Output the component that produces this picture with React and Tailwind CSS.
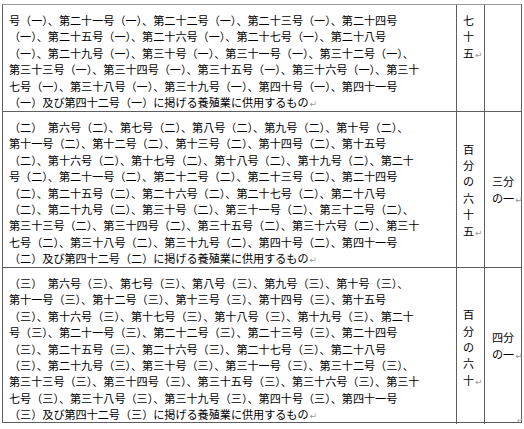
import React from "react";

const Mark = () => (
  <span className="text-[#9a9a9a] text-[9px] leading-none [font-family:'DejaVu_Sans',sans-serif] ml-[1px] align-baseline">↵</span>
);

function Lines({ lines }) {
  return (
    <div>
      {lines.map((l, i) => (
        <div key={i} className="whitespace-nowrap h-[16.4px]">
          {l}
          {i === lines.length - 1 && <Mark />}
        </div>
      ))}
    </div>
  );
}

const r1 = [
  "号（一）、第二十一号（一）、第二十二号（一）、第二十三号（一）、第二十四号",
  "（一）、第二十五号（一）、第二十六号（一）、第二十七号（一）、第二十八号",
  "（一）、第二十九号（一）、第三十号（一）、第三十一号（一）、第三十二号（一）、",
  "第三十三号（一）、第三十四号（一）、第三十五号（一）、第三十六号（一）、第三十",
  "七号（一）、第三十八号（一）、第三十九号（一）、第四十号（一）、第四十一号",
  "（一）及び第四十二号（一）に掲げる養殖業に供用するもの",
];

const mk = (k) => [
  `（${k}）　第六号（${k}）、第七号（${k}）、第八号（${k}）、第九号（${k}）、第十号（${k}）、`,
  `第十一号（${k}）、第十二号（${k}）、第十三号（${k}）、第十四号（${k}）、第十五号`,
  `（${k}）、第十六号（${k}）、第十七号（${k}）、第十八号（${k}）、第十九号（${k}）、第二十`,
  `号（${k}）、第二十一号（${k}）、第二十二号（${k}）、第二十三号（${k}）、第二十四号`,
  `（${k}）、第二十五号（${k}）、第二十六号（${k}）、第二十七号（${k}）、第二十八号`,
  `（${k}）、第二十九号（${k}）、第三十号（${k}）、第三十一号（${k}）、第三十二号（${k}）、`,
  `第三十三号（${k}）、第三十四号（${k}）、第三十五号（${k}）、第三十六号（${k}）、第三十`,
  `七号（${k}）、第三十八号（${k}）、第三十九号（${k}）、第四十号（${k}）、第四十一号`,
  `（${k}）及び第四十二号（${k}）に掲げる養殖業に供用するもの`,
];

const cellL = "pl-[6px] pt-[7px] pb-[1px]";

export default function App() {
  return (
    <div className="w-[524px] h-[429px] bg-white relative overflow-hidden text-black text-[11.1px] leading-[16.4px] [font-family:'Noto_Sans_CJK_JP','Noto_Sans_CJK_SC',sans-serif]">
      <div className="mt-[4px] ml-[2px] w-[520px] border border-[#5e5e5e] border-t-[#9a9a9a]">
        {/* row 1 */}
        <div className="grid grid-cols-[453px_28px_37px] h-[106px]">
          <div className={cellL}>
            <Lines lines={r1} />
          </div>
          <div className={`border-l border-[#5e5e5e] ${cellL}`}>
            <Lines lines={["七", "十", "五"]} />
          </div>
          <div className="border-l border-[#5e5e5e]"></div>
        </div>
        {/* row 2 */}
        <div className="grid grid-cols-[453px_28px_37px] border-t border-[#5e5e5e] h-[156px]">
          <div className={cellL}>
            <Lines lines={mk("二")} />
          </div>
          <div className="border-l border-[#5e5e5e] pl-[6px] flex items-center">
            <Lines lines={["百", "分", "の", "六", "十", "五"]} />
          </div>
          <div className="border-l border-[#5e5e5e] pl-[7px] flex items-center">
            <Lines lines={["三分", "の一"]} />
          </div>
        </div>
        {/* row 3 */}
        <div className="grid grid-cols-[453px_28px_37px] border-t border-[#5e5e5e] h-[155px]">
          <div className={cellL}>
            <Lines lines={mk("三")} />
          </div>
          <div className="border-l border-[#5e5e5e] pl-[6px] flex items-center pt-[3px]">
            <Lines lines={["百", "分", "の", "六", "十"]} />
          </div>
          <div className="border-l border-[#5e5e5e] pl-[7px] flex items-center">
            <Lines lines={["四分", "の一"]} />
          </div>
        </div>
      </div>
      <span className="absolute left-[517px] top-[418px] text-[#9a9a9a] text-[7px] leading-none [font-family:'DejaVu_Sans',sans-serif]">↵</span>
    </div>
  );
}
